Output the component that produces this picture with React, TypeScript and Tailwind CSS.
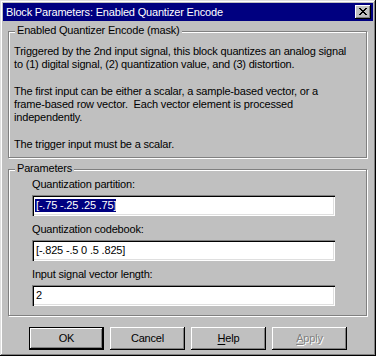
const fields = [
  { label: "Quantization partition:", value: "[-.75 -.25 .25 .75]", selected: true },
  { label: "Quantization codebook:", value: "[-.825 -.5 0 .5 .825]", selected: false },
  { label: "Input signal vector length:", value: "2", selected: false },
];

// classic 8x7 close glyph
const closeGlyph = [
  "XX....XX",
  ".XX..XX.",
  "..XXXX..",
  "...XX...",
  "..XXXX..",
  ".XX..XX.",
  "XX....XX",
];

function CloseButton() {
  return (
    <div className="w-[16px] h-[14px] bg-[#c0c0c0] flex items-center justify-center shadow-[inset_-1px_-1px_0_#000,inset_1px_1px_0_#fff,inset_-2px_-2px_0_#808080]">
      <svg width="8" height="7" viewBox="0 0 8 7" shapeRendering="crispEdges" className="mb-[1px]">
        {closeGlyph.map((row, y) =>
          row.split("").map((c, x) =>
            c === "X" ? <rect key={`${x}-${y}`} x={x} y={y} width="1" height="1" fill="#000" /> : null
          )
        )}
      </svg>
    </div>
  );
}

function Group({ title, className, children }: { title: string; className: string; children: React.ReactNode }) {
  return (
    <div
      className={
        "relative border border-[#808080] shadow-[1px_1px_0_#fff,inset_1px_1px_0_#fff] " + className
      }
    >
      <span className="absolute -top-[8px] left-[6px] px-[2px] bg-[#c0c0c0] leading-[13px]">{title}</span>
      {children}
    </div>
  );
}

function Button({ label, hotkey, isDefault, disabled }: { label: string; hotkey?: number; isDefault?: boolean; disabled?: boolean }) {
  const text =
    hotkey === undefined ? (
      label
    ) : (
      <>
        {label.slice(0, hotkey)}
        <span className="underline underline-offset-[2px]">{label[hotkey]}</span>
        {label.slice(hotkey + 1)}
      </>
    );
  return (
    <div
      className={
        isDefault
          ? "w-[75px] h-[23px] border border-black flex items-center justify-center shadow-[inset_-1px_-1px_0_#000,inset_1px_1px_0_#fff,inset_-2px_-2px_0_#808080]"
          : "w-[75px] h-[23px] flex items-center justify-center shadow-[inset_-1px_-1px_0_#000,inset_1px_1px_0_#fff,inset_-2px_-2px_0_#808080]"
      }
    >
      <span className={disabled ? "text-[#808080] [text-shadow:1px_1px_0_#fff]" : "text-black"}>{text}</span>
    </div>
  );
}

export default function App() {
  return (
    <div className="w-[376px] h-[356px] bg-[#c0c0c0] p-[3px] text-[11px] tracking-[-0.18px] text-black font-['Liberation_Sans',Arial,sans-serif] shadow-[inset_-1px_-1px_0_#000,inset_1px_1px_0_#dfdfdf,inset_-2px_-2px_0_#808080,inset_2px_2px_0_#fff]">
      {/* title bar */}
      <div className="h-[18px] bg-[#000080] flex items-center justify-between pl-[3px] pr-[2px]">
        <span className="text-white leading-[13px]">Block Parameters: Enabled Quantizer Encode</span>
        <CloseButton />
      </div>

      <Group title="Enabled Quantizer Encode (mask)" className="mt-[10px] ml-[5px] mr-[6px] h-[127px] pt-[13px] pl-[5px]">
        <div className="leading-[13.3px] whitespace-pre">
          <p>
            Triggered by the 2nd input signal, this block quantizes an analog signal
            <br />
            to (1) digital signal, (2) quantization value, and (3) distortion.
          </p>
          <p className="mt-[13.3px]">
            The first input can be either a scalar, a sample-based vector, or a
            <br />
            frame-based row vector.  Each vector element is processed
            <br />
            independently.
          </p>
          <p className="mt-[13.3px]">The trigger input must be a scalar.</p>
        </div>
      </Group>

      <Group title="Parameters" className="mt-[11px] ml-[5px] mr-[6px] h-[147px] pt-[8px] pl-[23px]">
        <div className="flex flex-col gap-[7px]">
          {fields.map((f) => (
            <div key={f.label} className="flex flex-col">
              <span className="leading-[13px]">{f.label}</span>
              <div className="mt-[4px] w-[303px] h-[21px] bg-white flex items-center pl-[3px] shadow-[inset_1px_1px_0_#808080,inset_2px_2px_0_#000,inset_-1px_-1px_0_#fff,inset_-2px_-2px_0_#dfdfdf]">
                <span className={f.selected ? "bg-[#000080] text-white pl-[1px] leading-[13px]" : "pl-[1px] leading-[13px]"}>
                  {f.value}
                </span>
              </div>
            </div>
          ))}
        </div>
      </Group>

      <div className="mt-[11px] flex justify-center gap-[6px]">
        <Button label="OK" isDefault />
        <Button label="Cancel" />
        <Button label="Help" hotkey={0} />
        <Button label="Apply" hotkey={0} disabled />
      </div>
    </div>
  );
}
